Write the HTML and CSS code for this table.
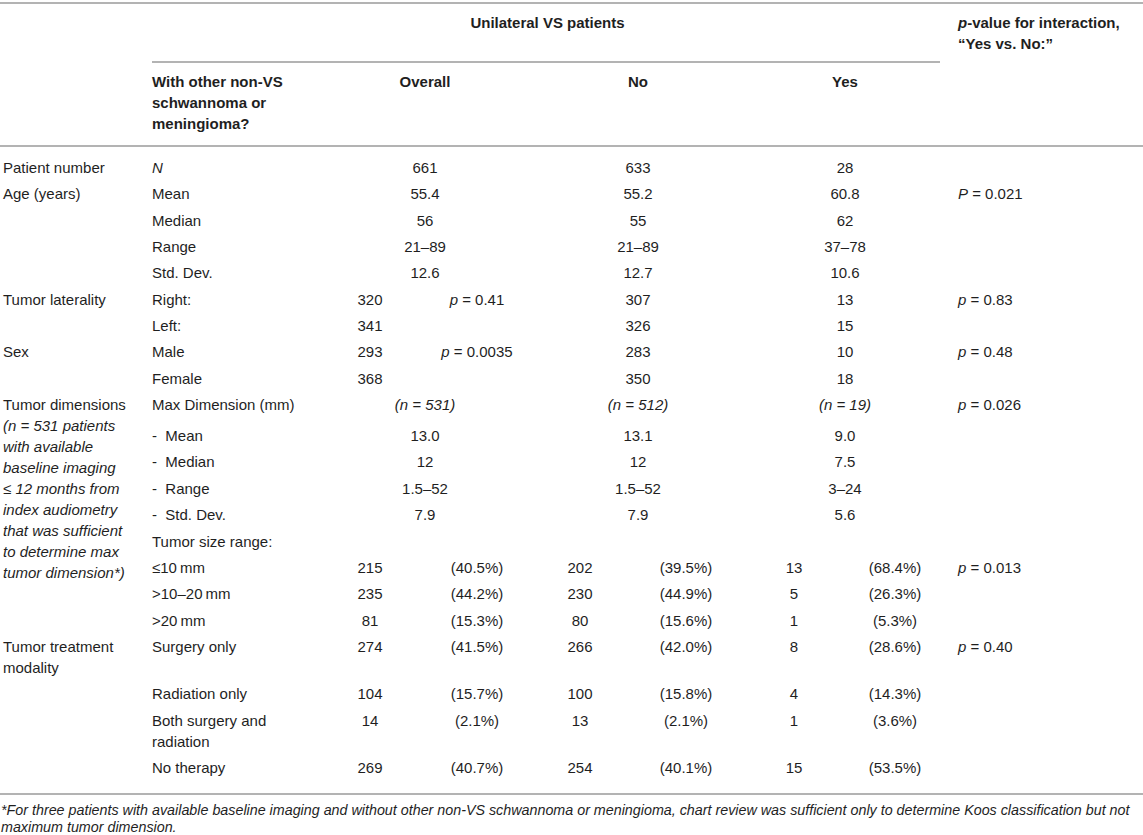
FILE: index.html
```html
<!DOCTYPE html>
<html lang="en">
<head>
<meta charset="utf-8">
<title>Unilateral VS patients</title>
<link rel="stylesheet" href="styles.css">
</head>
<body>
<div class="page">
  <table class="data-table">
    <colgroup>
      <col class="c-label"><col class="c-sub"><col class="c-ovn"><col class="c-ovp"><col class="c-non"><col class="c-nop"><col class="c-yesn"><col class="c-yesp"><col class="c-pval">
    </colgroup>
    <thead>
      <tr class="head-top">
        <th class="label" rowspan="2"></th>
        <th class="group" colspan="7">Unilateral VS patients</th>
        <th class="pval"><i>p</i>-value for interaction, “Yes vs. No:”</th>
      </tr>
      <tr class="head-sub">
        <th class="sub">With other non-VS schwannoma or meningioma?</th>
        <th colspan="2">Overall</th>
        <th colspan="2">No</th>
        <th colspan="2">Yes</th>
        <th class="pval"></th>
      </tr>
    </thead>
    <tbody>
      <tr class="first">
        <td class="label">Patient number</td><td class="sub"><i>N</i></td>
        <td colspan="2">661</td><td colspan="2">633</td><td colspan="2">28</td><td class="pval"></td>
      </tr>
      <tr>
        <td class="label" rowspan="4">Age (years)</td><td class="sub">Mean</td>
        <td colspan="2">55.4</td><td colspan="2">55.2</td><td colspan="2">60.8</td><td class="pval"><i>P</i> = 0.021</td>
      </tr>
      <tr>
        <td class="sub">Median</td>
        <td colspan="2">56</td><td colspan="2">55</td><td colspan="2">62</td><td class="pval"></td>
      </tr>
      <tr>
        <td class="sub">Range</td>
        <td colspan="2">21–89</td><td colspan="2">21–89</td><td colspan="2">37–78</td><td class="pval"></td>
      </tr>
      <tr>
        <td class="sub">Std. Dev.</td>
        <td colspan="2">12.6</td><td colspan="2">12.7</td><td colspan="2">10.6</td><td class="pval"></td>
      </tr>
      <tr>
        <td class="label" rowspan="2">Tumor laterality</td><td class="sub">Right:</td>
        <td>320</td><td><i>p</i> = 0.41</td><td colspan="2">307</td><td colspan="2">13</td><td class="pval"><i>p</i> = 0.83</td>
      </tr>
      <tr>
        <td class="sub">Left:</td>
        <td>341</td><td></td><td colspan="2">326</td><td colspan="2">15</td><td class="pval"></td>
      </tr>
      <tr>
        <td class="label" rowspan="2">Sex</td><td class="sub">Male</td>
        <td>293</td><td><i>p</i> = 0.0035</td><td colspan="2">283</td><td colspan="2">10</td><td class="pval"><i>p</i> = 0.48</td>
      </tr>
      <tr>
        <td class="sub">Female</td>
        <td>368</td><td></td><td colspan="2">350</td><td colspan="2">18</td><td class="pval"></td>
      </tr>
      <tr class="maxdim">
        <td class="label" rowspan="9">Tumor dimensions <span class="note">(n = 531 patients with available baseline imaging ≤&nbsp;12 months from index audiometry that was sufficient to determine max tumor dimension*)</span></td>
        <td class="sub">Max Dimension (mm)</td>
        <td colspan="2"><i>(n = 531)</i></td><td colspan="2"><i>(n = 512)</i></td><td colspan="2"><i>(n = 19)</i></td><td class="pval"><i>p</i> = 0.026</td>
      </tr>
      <tr>
        <td class="sub">-&nbsp; Mean</td>
        <td colspan="2">13.0</td><td colspan="2">13.1</td><td colspan="2">9.0</td><td class="pval"></td>
      </tr>
      <tr>
        <td class="sub">-&nbsp; Median</td>
        <td colspan="2">12</td><td colspan="2">12</td><td colspan="2">7.5</td><td class="pval"></td>
      </tr>
      <tr>
        <td class="sub">-&nbsp; Range</td>
        <td colspan="2">1.5–52</td><td colspan="2">1.5–52</td><td colspan="2">3–24</td><td class="pval"></td>
      </tr>
      <tr>
        <td class="sub">-&nbsp; Std. Dev.</td>
        <td colspan="2">7.9</td><td colspan="2">7.9</td><td colspan="2">5.6</td><td class="pval"></td>
      </tr>
      <tr>
        <td class="sub">Tumor size range:</td>
        <td colspan="2"></td><td colspan="2"></td><td colspan="2"></td><td class="pval"></td>
      </tr>
      <tr>
        <td class="sub">≤10&thinsp;mm</td>
        <td>215</td><td>(40.5%)</td><td>202</td><td>(39.5%)</td><td>13</td><td>(68.4%)</td><td class="pval"><i>p</i> = 0.013</td>
      </tr>
      <tr>
        <td class="sub">&gt;10–20&thinsp;mm</td>
        <td>235</td><td>(44.2%)</td><td>230</td><td>(44.9%)</td><td>5</td><td>(26.3%)</td><td class="pval"></td>
      </tr>
      <tr>
        <td class="sub">&gt;20&thinsp;mm</td>
        <td>81</td><td>(15.3%)</td><td>80</td><td>(15.6%)</td><td>1</td><td>(5.3%)</td><td class="pval"></td>
      </tr>
      <tr>
        <td class="label">Tumor treatment modality</td><td class="sub">Surgery only</td>
        <td>274</td><td>(41.5%)</td><td>266</td><td>(42.0%)</td><td>8</td><td>(28.6%)</td><td class="pval"><i>p</i> = 0.40</td>
      </tr>
      <tr>
        <td class="label"></td><td class="sub">Radiation only</td>
        <td>104</td><td>(15.7%)</td><td>100</td><td>(15.8%)</td><td>4</td><td>(14.3%)</td><td class="pval"></td>
      </tr>
      <tr>
        <td class="label"></td><td class="sub">Both surgery and radiation</td>
        <td>14</td><td>(2.1%)</td><td>13</td><td>(2.1%)</td><td>1</td><td>(3.6%)</td><td class="pval"></td>
      </tr>
      <tr class="last">
        <td class="label"></td><td class="sub">No therapy</td>
        <td>269</td><td>(40.7%)</td><td>254</td><td>(40.1%)</td><td>15</td><td>(53.5%)</td><td class="pval"></td>
      </tr>
    </tbody>
  </table>
  <p class="footnote">*For three patients with available baseline imaging and without other non-VS schwannoma or meningioma, chart review was sufficient only to determine Koos classification but not maximum tumor dimension.</p>
</div>
</body>
</html>
```

FILE: styles.css
```css
* {
  box-sizing: border-box;
}

html,
body {
  margin: 0;
  padding: 0;
  background: #ffffff;
}

body {
  font-family: "Liberation Sans", Arial, Helvetica, sans-serif;
  font-size: 15px;
  line-height: 21px;
  color: #1f1f1f;
}

.page {
  width: 1143px;
  padding-top: 2px;
}

.data-table {
  width: 1143px;
  table-layout: fixed;
  border-collapse: separate;
  border-spacing: 0;
}

.c-label { width: 149px; }
.c-sub   { width: 169px; }
.c-ovn   { width: 104px; }
.c-ovp   { width: 110px; }
.c-non   { width: 96px; }
.c-nop   { width: 116px; }
.c-yesn  { width: 100px; }
.c-yesp  { width: 102px; }
.c-pval  { width: 197px; }

.data-table th,
.data-table td {
  padding: 2.7px 0;
  vertical-align: top;
  text-align: center;
  font-weight: normal;
}

.data-table th {
  font-weight: bold;
}

.data-table .label {
  text-align: left;
  padding-left: 3px;
  padding-right: 12px;
}

.data-table .sub {
  text-align: left;
  padding-left: 3px;
  padding-right: 2px;
}

.data-table .pval {
  text-align: left;
  padding-left: 12px;
  padding-right: 2px;
}

.head-top th {
  border-top: 2px solid #b3b3b3;
  padding-top: 8px;
  padding-bottom: 8.5px;
}

.head-top th.label {
  border-bottom: 2px solid #b3b3b3;
}

.head-top th.group {
  background-image: linear-gradient(#b3b3b3, #b3b3b3);
  background-repeat: no-repeat;
  background-size: calc(100% - 9px) 2px;
  background-position: 3px 100%;
}

.head-sub th {
  padding-top: 8.3px;
  padding-bottom: 11.2px;
  border-bottom: 2px solid #b3b3b3;
}

.first td {
  padding-top: 9.8px;
}

.maxdim td {
  padding-bottom: 7.2px;
}

.note {
  display: block;
  font-style: italic;
}

.last td {
  padding-bottom: 15px;
}

.footnote {
  margin: 0;
  border-top: 2px solid #b3b3b3;
  padding: 6.5px 1px 0;
  font-size: 14.3px;
  line-height: 17px;
  font-style: italic;
}
```
